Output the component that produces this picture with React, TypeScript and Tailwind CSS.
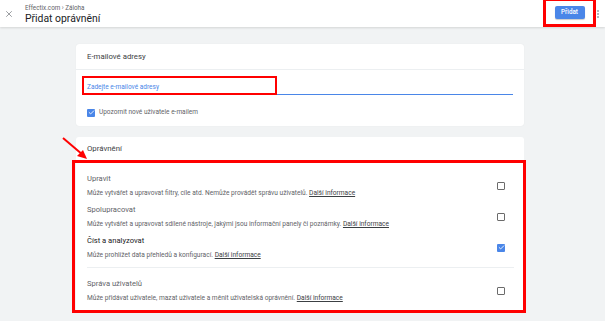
import { X, Check } from 'lucide-react';

type Perm = { title: string; desc: string; checked?: boolean; dark?: boolean };

const perms: Perm[] = [
  { title: 'Upravit', desc: 'Může vytvářet a upravovat filtry, cíle atd. Nemůže provádět správu uživatelů.' },
  { title: 'Spolupracovat', desc: 'Může vytvářet a upravovat sdílené nástroje, jakými jsou informační panely či poznámky.' },
  { title: 'Číst a analyzovat', desc: 'Může prohlížet data přehledů a konfigurací.', checked: true, dark: true },
];

function Box({ checked }: { checked?: boolean }) {
  if (checked)
    return (
      <div className="w-[8px] h-[8px] rounded-[1px] bg-[#4a86e8] flex items-center justify-center shrink-0">
        <Check size={7} strokeWidth={3} className="text-white" />
      </div>
    );
  return <div className="w-[8px] h-[8px] rounded-[1px] border-[1.5px] border-[#6b6b6b] shrink-0" />;
}

function Row({ p }: { p: Perm }) {
  return (
    <div className="flex items-start h-[31px] pr-[19px]">
      <div className="flex-1">
        <div className={`text-[7.6px] leading-[10px] ${p.dark ? 'text-[#202124]' : 'text-[#5f6368]'}`}>{p.title}</div>
        <div className="text-[6.6px] leading-[8px] mt-[5px] text-[#5f6368]">
          {p.desc} <span className="underline text-[#3c4043]">Další informace</span>
        </div>
      </div>
      <div className="mt-[8px]">
        <Box checked={p.checked} />
      </div>
    </div>
  );
}

export default function App() {
  return (
    <div className="relative w-[605px] h-[321px] overflow-hidden bg-[#f1f3f4] font-['Roboto',sans-serif]">
      {/* Header */}
      <div className="h-[27px] bg-white flex items-center shadow-[0_1px_2px_rgba(0,0,0,0.12)] relative">
        <X size={10} strokeWidth={1.5} className="text-[#5f6368] ml-[4px] mt-[1px]" />
        <div className="ml-[11px] mt-[3px]">
          <div className="text-[6.3px] leading-[7px] text-[#5f6368]">Effectix.com › Záloha</div>
          <div className="text-[10.4px] leading-[14px] text-[#202124]">Přidat oprávnění</div>
        </div>
        <div className="ml-auto flex items-center">
          <div className="border-[3px] border-[#ff0000] w-[53px] h-[29px] -mt-[2px] flex items-center justify-center">
            <div className="bg-[#4a86e8] text-white text-[6.3px] font-medium rounded-[2px] w-[30px] h-[13px] flex items-center justify-center shadow-[0_1px_1px_rgba(0,0,0,0.2)]">Přidat</div>
          </div>
          <div className="flex flex-col gap-[1px] ml-[1px] mr-[6px]">
            <div className="w-[2px] h-[2px] rounded-full bg-[#9aa0a6]" />
            <div className="w-[2px] h-[2px] rounded-full bg-[#9aa0a6]" />
            <div className="w-[2px] h-[2px] rounded-full bg-[#9aa0a6]" />
          </div>
        </div>
      </div>

      {/* Emails card */}
      <div className="ml-[76px] mt-[17px] w-[448px] bg-white rounded-[3px] shadow-[0_0_1px_rgba(0,0,0,0.1)]">
        <div className="h-[26px] flex items-center px-[11px] border-b border-[#eceff1] text-[7.8px] text-[#3c4043]">E-mailové adresy</div>
        <div className="relative px-[11px] pt-[13px]">
          <div className="border-b border-[#4a86e8] pb-[3px] text-[6.5px] leading-[8px] text-[#4a86e8] w-[426px]">Zadejte e-mailové adresy</div>
          <div className="absolute left-[6px] top-[6px] w-[195px] h-[19px] border-[2px] border-[#ff0000]" />
        </div>
        <div className="flex items-center gap-[4px] px-[11px] pt-[13px] pb-[8px]">
          <Box checked />
          <span className="text-[6.5px] text-[#5f6368]">Upozornit nové uživatele e-mailem</span>
        </div>
      </div>

      {/* Permissions card */}
      <div className="relative ml-[76px] mt-[11px] w-[448px] h-[176px] bg-white rounded-[3px]">
        <div className="h-[25px] flex items-center px-[11px] border-b border-[#eceff1] text-[7.8px] text-[#3c4043]">Oprávnění</div>
        <div className="pl-[11px] pt-[12px]">
          {perms.map((p) => (
            <Row key={p.title} p={p} />
          ))}
          <div className="border-b border-[#eceff1] mr-[10px]" />
          <div className="pt-[11px]">
            <Row p={{ title: 'Správa uživatelů', desc: 'Může přidávat uživatele, mazat uživatele a měnit uživatelská oprávnění.' }} />
          </div>
        </div>
        <div className="absolute left-[-4px] top-[23px] w-[454px] h-[153px] border-[3px] border-[#ff0000]" />
      </div>

      {/* Arrow */}
      <svg className="absolute left-[60px] top-[135px]" width="32" height="28" viewBox="0 0 32 28">
        <line x1="3" y1="3" x2="23" y2="20" stroke="#ff0000" strokeWidth="2" />
        <polygon points="27,24 17,21 23,15" fill="#ff0000" />
      </svg>
    </div>
  );
}
